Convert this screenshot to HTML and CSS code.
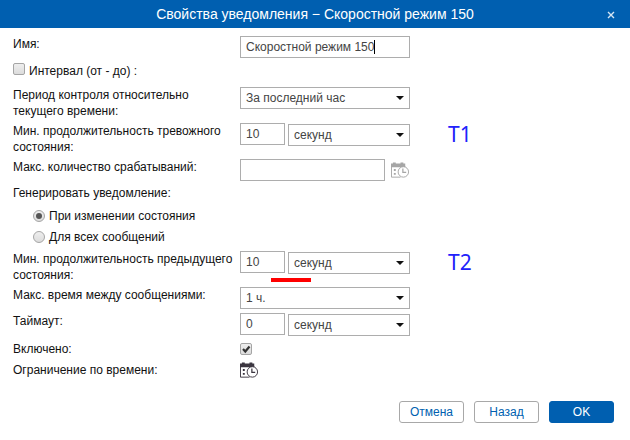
FILE: index.html
```html
<!DOCTYPE html>
<html lang="ru">
<head>
<meta charset="utf-8">
<title>Свойства уведомления</title>
<link rel="stylesheet" href="styles.css">
</head>
<body>
<svg class="defs" aria-hidden="true">
  <symbol id="schedule" viewBox="0 0 20 17">
    <path fill="currentColor" d="M0 1h2V0h3v1h5V0h3v1h2v4H0z"/>
    <path fill="none" stroke="currentColor" d="M.5 4v11.500H10M14.500 4v1"/>
    <path fill="currentColor" d="M3 7h2v2H3zM3 11h2v2H3z"/>
    <circle class="dial" cx="13" cy="10" r="5.500" stroke="currentColor"/>
    <path fill="none" stroke="currentColor" stroke-width="1.300" d="M12.500 6.500v4H16"/>
  </symbol>
</svg>
<form class="dialog">
  <header class="titlebar">
    <h1 class="title">Свойства уведомления − Скоростной режим 150</h1>
    <button class="close" type="button" aria-label="Закрыть">
      <svg class="cross" viewBox="0 0 8 8"><path d="M1 1l6 6M7 1L1 7"/></svg>
    </button>
  </header>

  <div class="fields">
    <div class="row">
      <label for="name">Имя:</label>
      <div class="control name-field">
        <input class="box" id="name" type="text" value="Скоростной режим 150">
        <span class="caret"></span>
      </div>
    </div>
    <div class="row choice-row">
      <label class="choice"><input class="tick" type="checkbox"><span>Интервал (от - до) :</span></label>
    </div>
    <div class="row">
      <label for="period">Период контроля относительно текущего времени:</label>
      <div class="control">
        <div class="select"><select class="box" id="period"><option>За последний час</option></select></div>
      </div>
    </div>
    <div class="row">
      <label for="alarm">Мин. продолжительность тревожного состояния:</label>
      <div class="control">
        <input class="box number" id="alarm" type="text" value="10">
        <div class="select"><select class="box" aria-label="Единица"><option>секунд</option></select></div>
      </div>
      <span class="note">T1</span>
    </div>
    <div class="row">
      <label for="count">Макс. количество срабатываний:</label>
      <div class="control with-icon">
        <input class="box" id="count" type="text">
        <button class="icon-button muted" type="button" aria-label="Расписание"><svg class="icon"><use href="#schedule"/></svg></button>
      </div>
    </div>
    <div class="row"><span>Генерировать уведомление:</span></div>
    <div class="radios">
      <label class="choice"><input class="radio" type="radio" name="when" checked><span>При изменении состояния</span></label>
      <label class="choice"><input class="radio" type="radio" name="when"><span>Для всех сообщений</span></label>
    </div>
    <div class="row">
      <label for="previous">Мин. продолжительность предыдущего состояния:</label>
      <div class="control">
        <input class="box number" id="previous" type="text" value="10">
        <div class="select"><select class="box" aria-label="Единица"><option>секунд</option></select></div>
        <span class="underline"></span>
      </div>
      <span class="note">T2</span>
    </div>
    <div class="row">
      <label for="between">Макс. время между сообщениями:</label>
      <div class="control">
        <div class="select"><select class="box" id="between"><option>1 ч.</option></select></div>
      </div>
    </div>
    <div class="row">
      <label for="timeout">Таймаут:</label>
      <div class="control">
        <input class="box number" id="timeout" type="text" value="0">
        <div class="select"><select class="box" aria-label="Единица"><option>секунд</option></select></div>
      </div>
    </div>
    <div class="row enabled-row">
      <label for="enabled">Включено:</label>
      <span class="tick-wrap">
        <input class="tick" id="enabled" type="checkbox" checked>
        <svg class="mark" viewBox="0 0 12 12"><path d="M3 6l2.300 2.500L9.500 3.500"/></svg>
      </span>
    </div>
    <div class="row">
      <label for="limit">Ограничение по времени:</label>
      <button class="icon-button" id="limit" type="button" aria-label="Ограничение по времени"><svg class="icon"><use href="#schedule"/></svg></button>
    </div>
  </div>

  <footer class="actions">
    <button class="button" type="button">Отмена</button>
    <button class="button" type="button">Назад</button>
    <button class="button primary" type="submit">OK</button>
  </footer>
</form>
</body>
</html>
```
FILE: styles.css
```css
* { box-sizing: border-box; }

body {
  margin: 0;
  background: #fff;
  color: #111;
  font: 12px/16px "Liberation Sans", Arial, sans-serif;
}

input, select, button { margin: 0; font: inherit; }

.defs { display: none; }

.titlebar {
  display: grid;
  grid-template-columns: 28px 1fr 28px;
  align-items: center;
  height: 28px;
  padding: 0 5px;
  background: #005fb0;
  color: #fff;
}

.title {
  grid-column: 2;
  margin: 0;
  font-size: 14px;
  font-weight: 400;
  text-align: center;
}

.close {
  display: grid;
  place-items: center;
  height: 28px;
  padding: 2px 0 0;
  border: 0;
  background: none;
}

.cross { width: 8px; height: 8px; fill: none; stroke: #d5e6f4; stroke-width: 1.4; }

.fields {
  display: flex;
  flex-direction: column;
  gap: 4px;
  padding: 8px 13px 0;
}

.row {
  display: grid;
  grid-template-columns: 227px 170px 1fr;
  align-items: start;
}

.choice { display: flex; align-items: center; gap: 4px; }
.choice-row { height: 21px; padding-top: 1px; }
.choice-row .choice { align-items: flex-start; }
.enabled-row { height: 18px; align-items: center; }

.control { position: relative; display: flex; gap: 3px; }

.box {
  width: 100%;
  min-width: 0;
  height: 22px;
  padding: 0 5px;
  border: 1px solid #adadad;
  border-radius: 0;
  outline: 0;
  background: #fff;
  color: #444;
  appearance: none;
}

.number { flex: none; width: 45px; }
.select { position: relative; flex: 1; }
.number + .select { padding-top: 1px; }

.select::after {
  content: "";
  position: absolute;
  right: 6px;
  bottom: 9px;
  border: 4px solid transparent;
  border-top-color: #111;
  border-bottom: 0;
  pointer-events: none;
}

.caret {
  position: absolute;
  top: 4px;
  left: 134px;
  width: 1px;
  height: 14px;
  background: #000;
}

.underline {
  position: absolute;
  top: 27px;
  left: 31px;
  width: 40px;
  height: 4px;
  background: #f00;
}

.note {
  padding-left: 38px;
  color: #2222fb;
  font: 21px/22px "Noto Sans", "Open Sans", sans-serif;
}

.with-icon { gap: 6px; align-items: center; }

.icon-button { width: 20px; height: 17px; padding: 0; border: 0; background: none; color: #3b3640; }
.with-icon .icon-button { flex: none; width: 19px; }
.muted { color: #a6a6a6; }
.icon { display: block; width: 19px; height: 17px; }
.dial { fill: #fff; }

.tick, .radio {
  display: block;
  position: relative;
  flex: none;
  width: 12px;
  height: 12px;
  border: 1px solid #a5a5a5;
  border-radius: 2px;
  background: linear-gradient(#eee, #dcdcdc);
  appearance: none;
}

.tick-wrap { position: relative; width: 12px; height: 12px; }

.mark {
  position: absolute;
  inset: 0;
  fill: none;
  stroke: #333;
  stroke-width: 2.2;
  pointer-events: none;
  visibility: hidden;
}

.tick:checked + .mark { visibility: visible; }

.radio { border-radius: 50%; }

.radio:checked::after {
  content: "";
  position: absolute;
  inset: 2px;
  border-radius: 50%;
  background: #555;
}

.radios { display: grid; grid-auto-rows: 21px; padding-left: 20px; }

.actions {
  display: flex;
  justify-content: flex-end;
  gap: 10px;
  padding: 22px 16px 17px;
}

.button {
  width: 65px;
  height: 22px;
  padding: 0;
  border: 1px solid #a8a8a8;
  border-radius: 3px;
  background: #fff;
  color: #005fb0;
}

.primary { border-color: #005fb0; background: #005fb0; color: #fff; }
```
